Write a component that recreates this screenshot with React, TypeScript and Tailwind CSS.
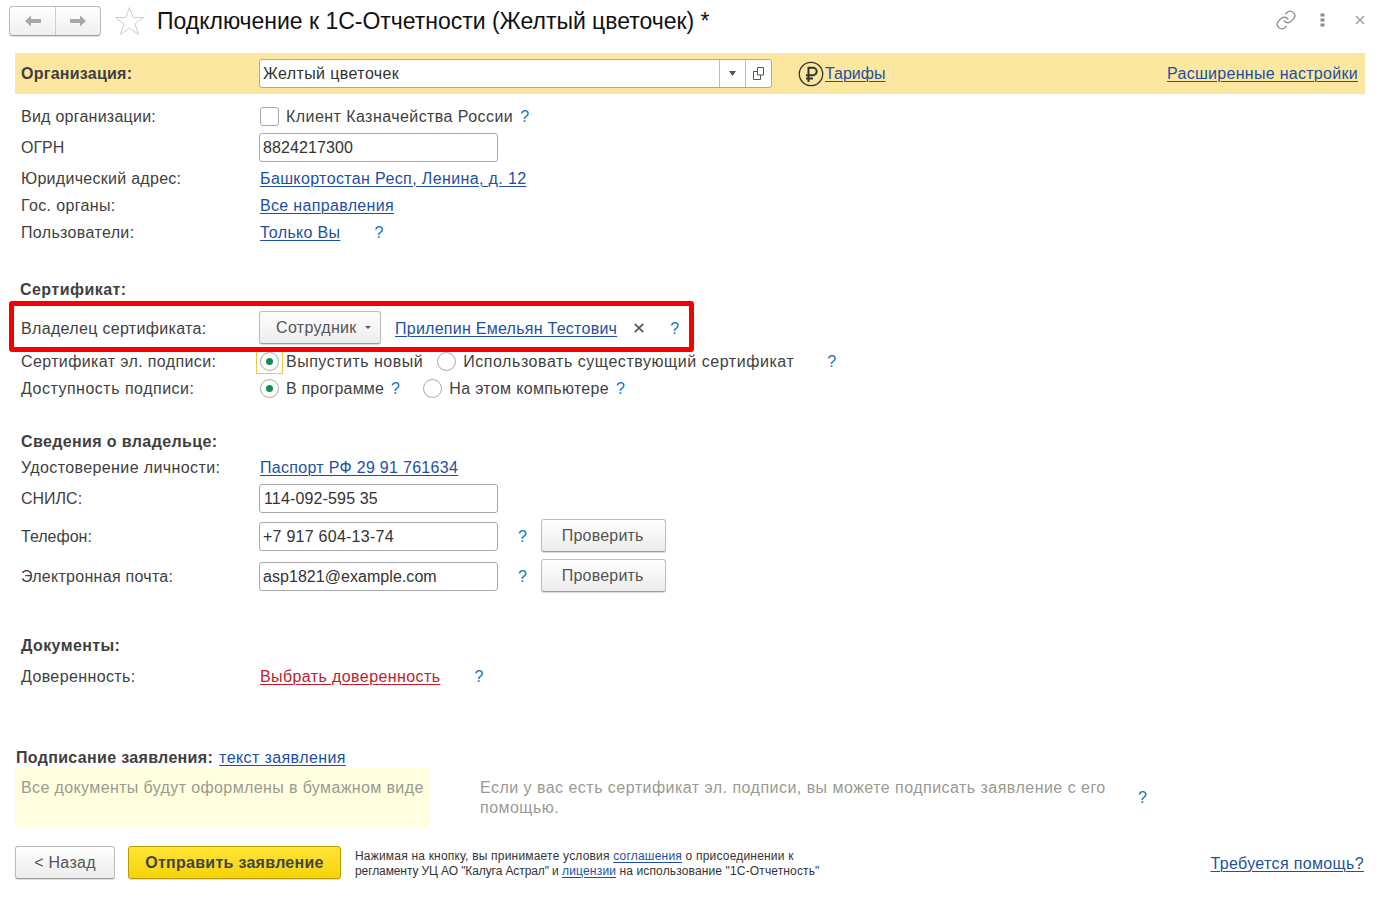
import React from "react";

const FONT = "font-['Liberation_Sans',Arial,sans-serif]";

function Row({ className = "", label, labelClass = "", children }: { className?: string; label?: string; labelClass?: string; children?: React.ReactNode }) {
  return (
    <div className={"flex items-center pl-[21px] shrink-0 " + className}>
      <div className={"w-[238px] shrink-0 whitespace-nowrap " + labelClass}>{label}</div>
      {children}
    </div>
  );
}

function A({ children, className = "" }: { children: React.ReactNode; className?: string }) {
  return <a className={"underline underline-offset-[2px] decoration-1 whitespace-nowrap text-[#1e4fa3] " + className}>{children}</a>;
}

function Q({ className = "" }: { className?: string }) {
  return <span className={"text-[#0f74b8] " + className}>?</span>;
}

function Field({ value, className = "" }: { value: string; className?: string }) {
  return (
    <div className={"h-[29px] w-[239px] border border-[#a8a8a8] rounded-[3px] bg-white flex items-center pl-[3px] text-[#333] leading-none " + className}>
      {value}
    </div>
  );
}

function Radio({ on }: { on?: boolean }) {
  return (
    <span className="w-[19px] h-[19px] rounded-full border border-[#a9a9a9] bg-white flex items-center justify-center shrink-0">
      {on && <span className="w-[7px] h-[7px] rounded-full bg-[#0c9150]" />}
    </span>
  );
}

function Btn({ children, className = "" }: { children: React.ReactNode; className?: string }) {
  return (
    <div className={"flex items-center rounded-[3px] border border-[#bdbdbd] border-b-[#9f9f9f] bg-gradient-to-b from-white to-[#ececec] shadow-[0_1px_1px_rgba(0,0,0,0.15)] text-[#555] " + className}>
      {children}
    </div>
  );
}

export default function App() {
  return (
    <div className={FONT + " relative w-[1385px] h-[908px] bg-white text-[16px] leading-[20px] tracking-[0.33px] text-[#3f3f3f] flex flex-col overflow-hidden"}>
      {/* Title bar */}
      <div className="h-[53px] flex items-start shrink-0">
        <div className="ml-[9px] mt-[6px] w-[92px] h-[30px] flex rounded-[4px] border border-[#bdbdbd] border-b-[#a0a0a0] bg-gradient-to-b from-white to-[#efefef] shadow-[0_1px_1px_rgba(0,0,0,0.15)]">
          <div className="w-[46px] border-r border-[#cfcfcf] flex items-center justify-center">
            <svg width="18" height="14" viewBox="0 0 18 14"><path d="M1 7 L7 1.5 V5 H17 V9 H7 V12.5 Z" fill="#a8a8a8" /></svg>
          </div>
          <div className="flex-1 flex items-center justify-center">
            <svg width="18" height="14" viewBox="0 0 18 14"><path d="M17 7 L11 1.5 V5 H1 V9 H11 V12.5 Z" fill="#a8a8a8" /></svg>
          </div>
        </div>
        <svg className="ml-[13px] mt-[6px]" width="31" height="30" viewBox="0 0 31 30">
          <path d="M15.5 1.5 L19 11.5 H29.5 L21 18 L24.5 28.5 L15.5 22 L6.5 28.5 L10 18 L1.5 11.5 H12 Z" fill="none" stroke="#c9ced2" strokeWidth="1" />
        </svg>
        <div className="ml-[12px] mt-[7px] text-[23px] leading-[28px] tracking-[-0.02px] text-[#111] whitespace-nowrap">Подключение к 1С-Отчетности (Желтый цветочек) *</div>
        <div className="ml-auto mt-[9px] flex items-center">
          <svg width="22" height="22" viewBox="0 0 24 24" fill="none" stroke="#8f8f8f" strokeWidth="1.5" strokeLinecap="round" strokeLinejoin="round">
            <path d="M10 13a5 5 0 0 0 7.5.5l3-3a5 5 0 0 0-7-7l-1.7 1.7" />
            <path d="M14 11a5 5 0 0 0-7.5-.5l-3 3a5 5 0 0 0 7 7l1.7-1.7" />
          </svg>
          <svg className="ml-[23px]" width="5" height="14" viewBox="0 0 5 14"><path d="M0.5 0.5h4v3h-4zM0.5 5.5h4v3h-4zM0.5 10.5h4v3h-4z" fill="#8a8a8a" /></svg>
          <svg className="ml-[30px] mr-[20px]" width="10" height="10" viewBox="0 0 10 10"><path d="M1 1 L9 9 M9 1 L1 9" stroke="#9a9a9a" strokeWidth="1.3" /></svg>
        </div>
      </div>

      {/* Organization bar */}
      <div className="ml-[15px] mr-[20px] h-[41px] bg-[#fbe79f] flex items-center pl-[6px] pr-[7px] shrink-0">
        <div className="w-[238px] font-bold tracking-[0.25px] shrink-0">Организация:</div>
        <div className="h-[29px] w-[513px] border border-[#a8a8a8] rounded-[3px] bg-white flex items-center text-[#333]">
          <div className="flex-1 pl-[3px] tracking-[0.4px]">Желтый цветочек</div>
          <div className="w-[26px] h-full border-l border-[#bdbdbd] flex items-center justify-center">
            <svg width="7" height="5" viewBox="0 0 7 5"><path d="M0 0H7L3.5 5Z" fill="#555" /></svg>
          </div>
          <div className="w-[26px] h-full border-l border-[#bdbdbd] flex items-center justify-center">
            <svg width="12" height="13" viewBox="0 0 12 13" fill="none" stroke="#555"><path d="M4.5 0.5H10.5V8H4.5Z" /><path d="M4.5 4.5H0.5V12.5H7.5V8" /></svg>
          </div>
        </div>
        <svg className="ml-[26px]" width="26" height="26" viewBox="0 0 26 26" fill="none" stroke="#333">
          <circle cx="13" cy="13" r="11.7" strokeWidth="1.3" />
          <path d="M10.5 21V6.8H15a3.6 3.6 0 0 1 0 7.4H8M8 17.5H15" strokeWidth="2" />
        </svg>
        <A className="ml-px tracking-normal">Тарифы</A>
        <A className="ml-auto tracking-[0.29px]">Расширенные настройки</A>
      </div>

      <Row className="h-[27px] mt-[9px]" label="Вид организации:" labelClass="tracking-[0.25px]">
        <span className="ml-[1px] w-[19px] h-[19px] rounded-[3px] border border-[#a9a9a9] bg-white" />
        <span className="ml-[7px] whitespace-nowrap tracking-[0.44px]">Клиент Казначейства России</span>
        <Q className="ml-[7px]" />
      </Row>
      <Row className="h-[29px] mt-[3px]" label="ОГРН" labelClass="tracking-normal"><Field value="8824217300" className="tracking-[0.1px]" /></Row>
      <Row className="h-[27px] mt-[3px]" label="Юридический адрес:" labelClass="tracking-[0.28px]"><A className="ml-px tracking-[0.375px]">Башкортостан Респ, Ленина, д. 12</A></Row>
      <Row className="h-[27px]" label="Гос. органы:" labelClass="tracking-[0.36px]"><A className="ml-px">Все направления</A></Row>
      <Row className="h-[27px]" label="Пользователи:" labelClass="tracking-[0.35px]">
        <A className="ml-px">Только Вы</A>
        <Q className="ml-[34px]" />
      </Row>

      <div className="h-[27px] mt-[30px] pl-[20px] flex items-center font-bold tracking-[0.45px] shrink-0">Сертификат:</div>

      <Row className="relative h-[33px] mt-[8px]" label="Владелец сертификата:" labelClass="mt-[2px]">
        <div className="absolute z-10 left-[9px] top-[-10px] w-[685px] h-[51px] border-[5px] border-[#f60000] rounded-[3px]" />
        <Btn className="w-[122px] h-[33px] gap-[8px] pl-[16px]">
          <span>Сотрудник</span>
          <svg width="6" height="3" viewBox="0 0 6 3"><path d="M0 0H6L3 3Z" fill="#555" /></svg>
        </Btn>
        <A className="ml-[14px] mt-[2px] tracking-[0.26px]">Прилепин Емельян Тестович</A>
        <svg className="ml-[17px]" width="10" height="10" viewBox="0 0 10 10"><path d="M0.8 0.8 L9.2 9.2 M9.2 0.8 L0.8 9.2" stroke="#555" strokeWidth="1.7" /></svg>
        <Q className="ml-[26px] mt-[2px]" />
      </Row>

      <Row className="h-[27px] mt-[4px]" label="Сертификат эл. подписи:" labelClass="tracking-[0.38px]">
        <span className="relative flex ml-px">
          <span className="absolute left-[-4px] top-[-4px] w-[27px] h-[26px] border border-[#f0c84a]" />
          <Radio on />
        </span>
        <span className="ml-[7px] whitespace-nowrap tracking-[0.5px]">Выпустить новый</span>
        <span className="ml-[14px] flex"><Radio /></span>
        <span className="ml-[7px] whitespace-nowrap tracking-[0.55px]">Использовать существующий сертификат</span>
        <Q className="ml-[33px]" />
      </Row>
      <Row className="h-[27px]" label="Доступность подписи:" labelClass="tracking-[0.5px]">
        <span className="flex ml-px"><Radio on /></span>
        <span className="ml-[7px] whitespace-nowrap tracking-[0.18px]">В программе</span>
        <Q className="ml-[7px]" />
        <span className="ml-[23px] flex"><Radio /></span>
        <span className="ml-[7px] whitespace-nowrap">На этом компьютере</span>
        <Q className="ml-[7px]" />
      </Row>

      <div className="h-[27px] mt-[26px] pl-[21px] flex items-center font-bold tracking-[0.38px] shrink-0">Сведения о владельце:</div>
      <Row className="h-[25px]" label="Удостоверение личности:" labelClass="tracking-[0.39px]"><A className="ml-px tracking-[0.3px]">Паспорт РФ 29 91 761634</A></Row>
      <Row className="h-[29px] mt-[4px]" label="СНИЛС:" labelClass="tracking-normal"><Field value="114-092-595 35" className="pl-[4px] tracking-[0.15px]" /></Row>
      <Row className="h-[33px] mt-[6px]" label="Телефон:" labelClass="mt-[2px] tracking-normal">
        <Field value="+7 917 604-13-74" className="mt-[2px] tracking-[0.25px]" />
        <Q className="ml-[20px] mt-[2px]" />
        <Btn className="ml-[14px] w-[125px] h-[33px] justify-center tracking-[0.2px] pr-[2px]">Проверить</Btn>
      </Row>
      <Row className="h-[33px] mt-[7px]" label="Электронная почта:" labelClass="mt-[2px] tracking-[0.28px]">
        <Field value="asp1821@example.com" className="mt-[2px] tracking-[0.05px]" />
        <Q className="ml-[20px] mt-[2px]" />
        <Btn className="ml-[14px] w-[125px] h-[33px] justify-center tracking-[0.2px] pr-[2px]">Проверить</Btn>
      </Row>

      <div className="h-[27px] mt-[40px] pl-[21px] flex items-center font-bold tracking-[0.4px] shrink-0">Документы:</div>
      <Row className="h-[27px] mt-[4px]" label="Доверенность:" labelClass="tracking-[0.38px]">
        <A className="ml-px !text-[#c01c2e] tracking-[0.4px]">Выбрать доверенность</A>
        <Q className="ml-[34px]" />
      </Row>

      <div className="h-[21px] mt-[57px] pl-[16px] flex items-center shrink-0">
        <span className="font-bold">Подписание заявления:</span>
        <A className="ml-[6px] tracking-[0.4px]">текст заявления</A>
      </div>

      <div className="h-[60px] flex shrink-0 ml-[15px]">
        <div className="w-[414px] bg-[#ffffdf] pl-[6px] pt-[10px] tracking-[0.38px] text-[#9a9a92] whitespace-nowrap">Все документы будут оформлены в бумажном виде</div>
        <div className="ml-[51px] w-[650px] pt-[10px] tracking-[0.47px] text-[#9a9a92]">Если у вас есть сертификат эл. подписи, вы можете подписать заявление с его помощью.</div>
        <Q className="ml-[8px] mt-[20px]" />
      </div>

      <div className="h-[33px] mt-[18px] ml-[15px] mr-[21px] flex items-center shrink-0">
        <Btn className="w-[100px] h-[33px] justify-center tracking-[0.3px]">&lt; Назад</Btn>
        <div className="ml-[13px] w-[213px] h-[33px] rounded-[3px] border border-[#b89b00] bg-gradient-to-b from-[#ffe433] to-[#f4d400] shadow-[0_1px_1px_rgba(0,0,0,0.15)] flex items-center justify-center font-bold tracking-[0.28px] text-[#444]">Отправить заявление</div>
        <div className="ml-[14px] mt-[2px] text-[12px] leading-[15px] text-[#333] whitespace-nowrap">
          <div className="tracking-[0.2px]">Нажимая на кнопку, вы принимаете условия <A>соглашения</A> о присоединении к</div>
          <div className="tracking-[-0.1px]">регламенту УЦ АО "Калуга Астрал" и <A className="tracking-[0.2px]">лицензии</A> <span className="tracking-[0.14px]">на использование "1С-Отчетность"</span></div>
        </div>
        <A className="ml-auto mt-[2px] tracking-[0.35px]">Требуется помощь?</A>
      </div>
    </div>
  );
}
